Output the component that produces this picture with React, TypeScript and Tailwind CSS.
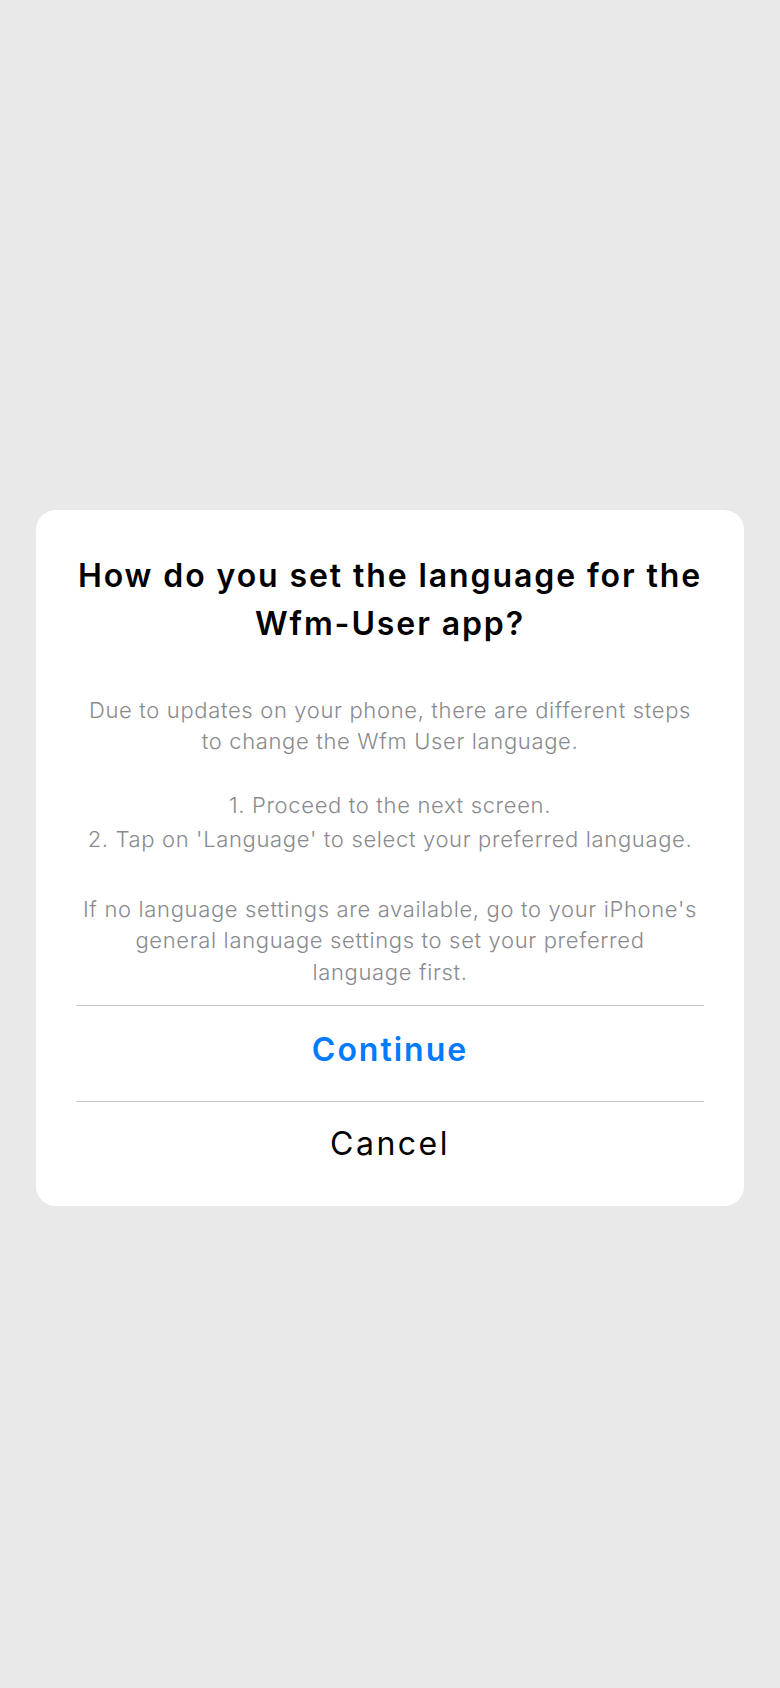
import React from "react";

const font = { fontFamily: "Inter, 'Noto Sans', sans-serif" };

const App = () => {
  return (
    <div
      className="min-h-[1688px] w-full bg-[#e9e9e9] flex items-center justify-center pt-[28px] px-[36px]"
      style={font}
    >
      {/* Language dialog */}
      <div className="w-full bg-white rounded-[20px] flex flex-col">
        <div className="px-[30px] pt-[42px] pb-[17px] text-center">
          <h2 className="text-[32px] leading-[48px] font-semibold text-black tracking-[1.9px]">
            How do you set the language for the
            <br />
            Wfm-User app?
          </h2>

          <div className="mt-[47px] text-[22px] leading-[31.5px] font-light text-[#8a8a8e] tracking-[0.65px]">
            <p>
              Due to updates on your phone, there are different steps
              <br />
              to change the Wfm User language.
            </p>
            <p className="mt-[30px] leading-[34px]">
              1. Proceed to the next screen.
              <br />
              2. Tap on 'Language' to select your preferred language.
            </p>
            <p className="mt-[38px]">
              If no language settings are available, go to your iPhone's
              <br />
              general language settings to set your preferred
              <br />
              language first.
            </p>
          </div>
        </div>

        <div className="mx-[40px] border-t border-[#c8c8c8]" />
        <button className="h-[95px] pb-[8px] text-[32px] font-semibold text-[#007aff] tracking-[2px]">
          Continue
        </button>
        <div className="mx-[40px] border-t border-[#c8c8c8]" />
        <button className="h-[84px] text-[32px] font-normal text-black tracking-[2.5px]">
          Cancel
        </button>
        <div className="h-[20px]" />
      </div>
    </div>
  );
};

export default App;
